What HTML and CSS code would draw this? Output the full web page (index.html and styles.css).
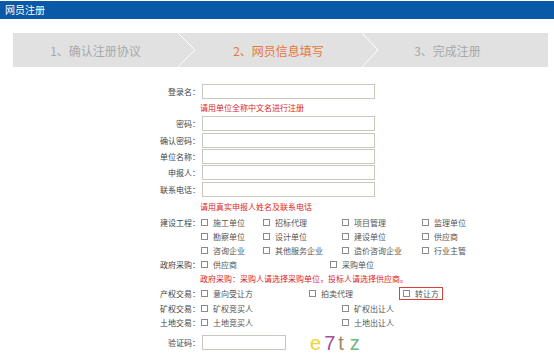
FILE: index.html
```html
<!DOCTYPE html>
<html lang="zh-CN">
<head>
    <meta charset="UTF-8">
    <title>网员注册</title>
    <link rel="stylesheet" href="styles.css">
</head>
<body>
    <div class="title-bar">网员注册</div>

    <div class="steps">
        <div class="step step-one">1、确认注册协议</div>
        <svg class="chevron" width="17" height="34" viewBox="0 0 17 34"><polyline points="0,0 17,17 0,34" fill="none" stroke="#fff" stroke-width="1"/></svg>
        <div class="step step-two active">2、网员信息填写</div>
        <svg class="chevron" width="16" height="34" viewBox="0 0 16 34"><polyline points="0,0 16,17 0,34" fill="none" stroke="#fff" stroke-width="1"/></svg>
        <div class="step step-three">3、完成注册</div>
    </div>

    <div class="reg-form">
        <div class="row field">
            <label>登录名：</label>
            <input type="text" class="txt">
        </div>
        <div class="row field">
            <span></span>
            <span class="note">请用单位全称中文名进行注册</span>
        </div>
        <div class="row field">
            <label>密码：</label>
            <input type="password" class="txt">
        </div>
        <div class="row field">
            <label>确认密码：</label>
            <input type="password" class="txt">
        </div>
        <div class="row field">
            <label>单位名称：</label>
            <input type="text" class="txt">
        </div>
        <div class="row field">
            <label>申报人：</label>
            <input type="text" class="txt">
        </div>
        <div class="row field">
            <label>联系电话：</label>
            <input type="text" class="txt">
        </div>
        <div class="row note-row-big">
            <span></span>
            <span class="note">请用真实申报人姓名及联系电话</span>
        </div>

        <div class="row check">
            <label>建设工程：</label>
            <div class="opts opts-build">
                <span class="opt"><i class="box"></i>施工单位</span>
                <span class="opt"><i class="box"></i>招标代理</span>
                <span class="opt"><i class="box"></i>项目管理</span>
                <span class="opt"><i class="box"></i>监理单位</span>
            </div>
        </div>
        <div class="row check">
            <span></span>
            <div class="opts opts-build">
                <span class="opt"><i class="box"></i>勘察单位</span>
                <span class="opt"><i class="box"></i>设计单位</span>
                <span class="opt"><i class="box"></i>建设单位</span>
                <span class="opt"><i class="box"></i>供应商</span>
            </div>
        </div>
        <div class="row check">
            <span></span>
            <div class="opts opts-build">
                <span class="opt"><i class="box"></i>咨询企业</span>
                <span class="opt"><i class="box"></i>其他服务企业</span>
                <span class="opt"><i class="box"></i>造价咨询企业</span>
                <span class="opt"><i class="box"></i>行业主管</span>
            </div>
        </div>
        <div class="row check">
            <label>政府采购：</label>
            <div class="opts opts-gov">
                <span class="opt"><i class="box"></i>供应商</span>
                <span class="opt"><i class="box"></i>采购单位</span>
            </div>
        </div>
        <div class="row check">
            <span></span>
            <span class="note">政府采购：采购人请选择采购单位，投标人请选择供应商。</span>
        </div>
        <div class="row check property">
            <label>产权交易：</label>
            <div class="opts opts-prop">
                <span class="opt"><i class="box"></i>意向受让方</span>
                <span class="opt"><i class="box"></i>拍卖代理</span>
                <span class="opt marked"><i class="box"></i>转让方</span>
            </div>
        </div>
        <div class="row check">
            <label>矿权交易：</label>
            <div class="opts opts-land">
                <span class="opt"><i class="box"></i>矿权竞买人</span>
                <span class="opt"><i class="box"></i>矿权出让人</span>
            </div>
        </div>
        <div class="row check">
            <label>土地交易：</label>
            <div class="opts opts-land">
                <span class="opt"><i class="box"></i>土地竞买人</span>
                <span class="opt"><i class="box"></i>土地出让人</span>
            </div>
        </div>

        <div class="row captcha-row">
            <label>验证码：</label>
            <div class="captcha-wrap">
                <input type="text" class="txt code">
                <span class="captcha"><b class="c1">e</b><b class="c2">7</b><b class="c3">t</b><b class="c4">z</b></span>
            </div>
        </div>
    </div>
</body>
</html>
```

FILE: styles.css
```css
body {
    margin: 0;
    padding: 0;
    background-color: #fff;
    font-family: "Noto Sans CJK SC", "Noto Sans", sans-serif;
    color: #444;
}

/* 顶部标题条 */
.title-bar {
    margin-top: 1px;
    height: 18px;
    line-height: 18px;
    padding-left: 5px;
    background-color: #0a58a8;
    color: #fff;
    font-size: 10px;
}

/* 步骤条 */
.steps {
    display: flex;
    height: 34px;
    margin: 14px 6px 0 13px;
    background-color: #e1e1e1;
}

.step {
    display: flex;
    align-items: center;
    justify-content: center;
    font-size: 12px;
    color: #a8a8a8;
}

.step-one {
    width: 165px;
}

.step-two {
    width: 167px;
}

.step-three {
    flex: 1;
    padding-right: 31px;
}

.step.active {
    color: #e8773b;
}

.chevron {
    display: block;
    flex: none;
}

/* 表单 */
.reg-form {
    margin-top: 16px;
    font-size: 8px;
}

.row {
    display: grid;
    grid-template-columns: 200px 1fr;
    align-items: center;
}

.row label {
    text-align: right;
    color: #444;
}

.field {
    height: 16.33px;
}

.note-row-big {
    height: 18.6px;
}

.check {
    height: 13.83px;
}

.property {
    height: 17px;
}

.note {
    color: #e0231c;
}

.txt {
    box-sizing: border-box;
    width: 173px;
    height: 15px;
    margin: 0 0 0 2px;
    padding: 0 3px;
    border: 1px solid #cbc7bf;
    background: #fff;
    font-size: 8px;
}

.opts {
    display: grid;
    padding-left: 1px;
    color: #555;
}

.opts-build {
    grid-template-columns: 62px 79px 80px auto;
}

.opts-gov {
    grid-template-columns: 129px auto;
}

.opts-prop {
    grid-template-columns: 108px 90px auto;
    align-items: center;
}

.opts-land {
    grid-template-columns: 141px auto;
}

.opt {
    display: flex;
    align-items: center;
    gap: 5px;
    white-space: nowrap;
}

.box {
    display: block;
    width: 5px;
    height: 5px;
    border: 1px solid #8a8a8a;
    background: #fff;
}

.marked {
    box-sizing: border-box;
    width: 44px;
    height: 13px;
    padding-left: 3px;
    border: 1px solid #d9403c;
}

.captcha-row {
    height: 26px;
}

.captcha-wrap {
    display: flex;
    align-items: center;
}

.code {
    width: 84px;
    height: 15px;
}

.captcha {
    margin-left: 24px;
    font-family: "Liberation Sans", Arial, sans-serif;
    font-size: 20px;
    line-height: 20px;
    letter-spacing: 3px;
}

.captcha b {
    font-weight: normal;
}

.c1 { color: #f2d331; }
.c2 { color: #a4509a; }
.c3 { color: #a58465; }
.c4 { color: #6db87c; margin-left: 3px; }
```
